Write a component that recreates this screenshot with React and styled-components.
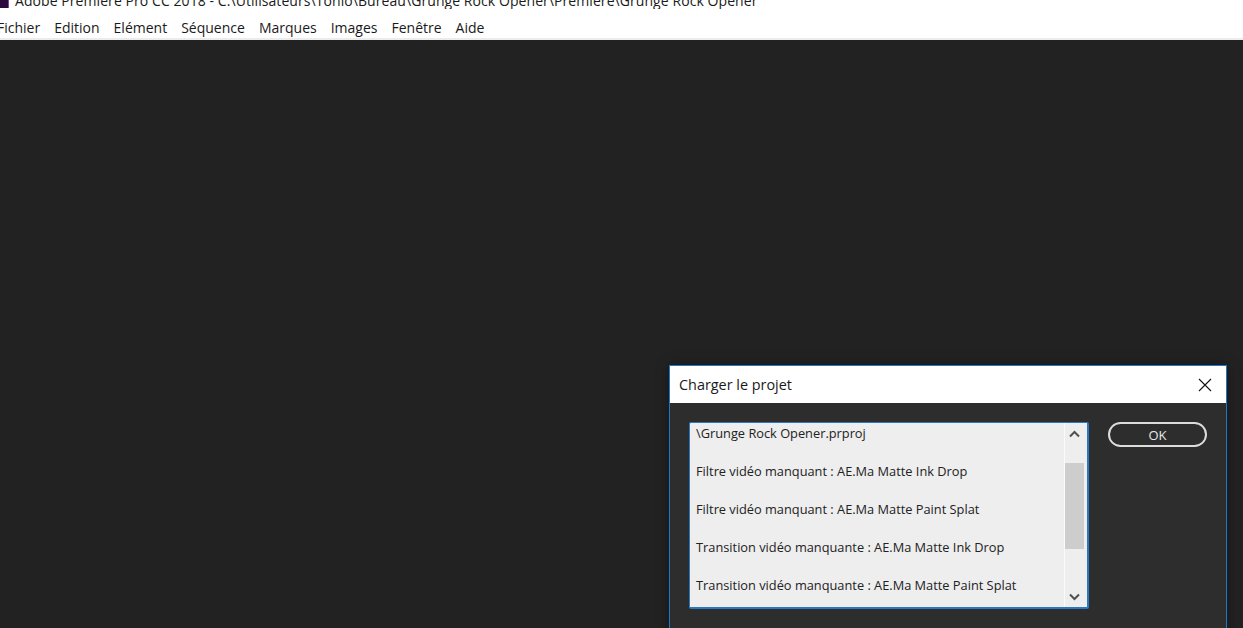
import React from "react";
import styled, { createGlobalStyle } from "styled-components";

const Global = createGlobalStyle`
  html, body { margin: 0; padding: 0; height: 100%; overflow: hidden; background: #222222; }
  #root { height: 628px; }
`;

const Page = styled.div`
  position: relative;
  width: 1243px;
  height: 628px;
  overflow: hidden;
  display: flex;
  flex-direction: column;
  background: #222222;
`;

const Chrome = styled.header`
  height: 38px;
  background: #fff;
  flex: none;
  font-family: "Open Sans", "Noto Sans", sans-serif;
  color: #1a1a1a;
  font-size: 14px;
`;

const TitleRow = styled.div`
  height: 9px;
  display: flex;
  align-items: flex-end;
  gap: 6px;
  white-space: nowrap;
  overflow: hidden;
`;

const AppIcon = styled.span`
  width: 8px;
  height: 8px;
  margin-bottom: 1px;
  background: #2a0a3a;
  flex: none;
  border-right: 1px solid #7a4a9a;
`;

const TitleText = styled.span`
  line-height: 19px;
  margin-bottom: -1px;
  letter-spacing: 0.07px;
`;

const Menu = styled.nav`
  display: flex;
  gap: 14px;
  height: 29px;
  box-sizing: border-box;
  align-items: center;
  margin-left: -3px;
  padding-top: 8px;
`;

const MenuItem = styled.span`
  line-height: 20px;
  white-space: nowrap;
`;

const Divider = styled.div`
  height: 2px;
  background: #ececec;
  flex: none;
`;

const Workspace = styled.main`
  flex: 1;
  background: #222222;
`;

const Dialog = styled.section`
  position: absolute;
  left: 669px;
  top: 365px;
  width: 558px;
  height: 280px;
  box-sizing: border-box;
  border: 1px solid #1a78d0;
  background: #2d2d2d;
  box-shadow: 0 0 12px rgba(0, 0, 0, 0.35);
  font-family: "Open Sans", "Noto Sans", sans-serif;
  display: flex;
  flex-direction: column;
`;

const DialogHeader = styled.div`
  height: 37px;
  flex: none;
  background: #fff;
  display: flex;
  align-items: center;
  justify-content: space-between;
  padding: 0 14px 0 9px;
  font-size: 14.4px;
  color: #1a1a1a;
`;

const CloseButton = styled.button`
  all: unset;
  display: flex;
  width: 14px;
  height: 14px;
`;

const DialogBody = styled.div`
  display: flex;
  align-items: flex-start;
  padding: 19px 18px 0 19px;
  gap: 19px;
`;

const ListBox = styled.div`
  width: 400px;
  height: 187px;
  box-sizing: border-box;
  flex: none;
  background: #eeeeee;
  border: 1px solid #2a78c2;
  border-bottom-width: 2px;
  border-right-width: 2px;
  border-radius: 2px;
  display: flex;
  overflow: hidden;
`;

const Lines = styled.div`
  flex: 1;
  padding: 0 0 0 6px;
  display: flex;
  flex-direction: column;
  margin-top: -9px;
`;

const Line = styled.div`
  height: 38px;
  line-height: 38px;
  font-size: 12.8px;
  color: #222;
  white-space: nowrap;
`;

const Scrollbar = styled.div`
  width: 19px;
  flex: none;
  margin-right: 3px;
  border-left: 1px solid #fafafa;
  display: flex;
  flex-direction: column;
  align-items: center;
  background: #eeeeee;
`;

const ArrowSlot = styled.div`
  height: 21px;
  display: flex;
  align-items: center;
  justify-content: center;
  flex: none;
`;

const Track = styled.div`
  flex: 1;
  width: 100%;
  padding-top: 19px;
  box-sizing: border-box;
`;

const Thumb = styled.div`
  height: 86px;
  width: 100%;
  background: #cdcdcd;
`;

const OkButton = styled.button`
  all: unset;
  box-sizing: border-box;
  width: 99px;
  height: 25px;
  border: 2px solid #dcdcdc;
  border-radius: 13px;
  text-align: center;
  line-height: 22px;
  font-size: 13px;
  color: #e8e8e8;
`;

const lines = [
  "\\Grunge Rock Opener.prproj",
  "Filtre vidéo manquant : AE.Ma Matte Ink Drop",
  "Filtre vidéo manquant : AE.Ma Matte Paint Splat",
  "Transition vidéo manquante : AE.Ma Matte Ink Drop",
  "Transition vidéo manquante : AE.Ma Matte Paint Splat",
];

const menu = ["Fichier", "Edition", "Elément", "Séquence", "Marques", "Images", "Fenêtre", "Aide"];

export default function App() {
  return (
    <Page>
      <Global />
      <Chrome>
        <TitleRow>
          <AppIcon />
          <TitleText>Adobe Premiere Pro CC 2018 - C:\Utilisateurs\Tonio\Bureau\Grunge Rock Opener\Premiere\Grunge Rock Opener</TitleText>
        </TitleRow>
        <Menu>
          {menu.map((m) => (
            <MenuItem key={m}>{m}</MenuItem>
          ))}
        </Menu>
      </Chrome>
      <Divider />
      <Workspace />
      <Dialog>
        <DialogHeader>
          <span>Charger le projet</span>
          <CloseButton aria-label="Fermer">
            <svg width="14" height="14" viewBox="0 0 14 14">
              <path d="M1 1 L13 13 M13 1 L1 13" stroke="#111" strokeWidth="1.1" fill="none" />
            </svg>
          </CloseButton>
        </DialogHeader>
        <DialogBody>
          <ListBox>
            <Lines>
              {lines.map((l) => (
                <Line key={l}>{l}</Line>
              ))}
            </Lines>
            <Scrollbar>
              <ArrowSlot>
                <svg width="11" height="8" viewBox="0 0 11 8">
                  <path d="M1 6.5 L5.5 2 L10 6.5" stroke="#505050" strokeWidth="2" fill="none" />
                </svg>
              </ArrowSlot>
              <Track>
                <Thumb />
              </Track>
              <ArrowSlot>
                <svg width="11" height="8" viewBox="0 0 11 8">
                  <path d="M1 1.5 L5.5 6 L10 1.5" stroke="#505050" strokeWidth="2" fill="none" />
                </svg>
              </ArrowSlot>
            </Scrollbar>
          </ListBox>
          <OkButton>OK</OkButton>
        </DialogBody>
      </Dialog>
    </Page>
  );
}
